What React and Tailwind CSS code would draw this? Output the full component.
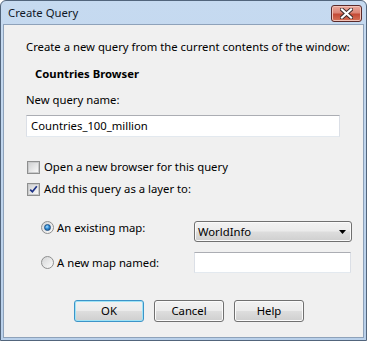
import React from 'react';

const font = { fontFamily: '"Segoe UI", "Noto Sans", "Open Sans", sans-serif' };

function CloseGlyph() {
  return (
    <svg width="13" height="11" viewBox="0 0 13 11" aria-hidden="true">
      <path d="M2 1.5 L11 9.5 M11 1.5 L2 9.5" stroke="#3b2a2a" strokeWidth="4" strokeLinecap="square" />
      <path d="M2 1.5 L11 9.5 M11 1.5 L2 9.5" stroke="#ffffff" strokeWidth="2.2" strokeLinecap="square" />
    </svg>
  );
}

function Checkbox({ checked }) {
  return (
    <span className="grid h-[13px] w-[13px] shrink-0 place-items-center border border-[#8e8f8f] bg-white">
      <span className="grid h-[11px] w-[11px] place-items-center border border-[#c9cacb] bg-gradient-to-br from-[#d2d3d4] to-[#f8f8f8]">
        {checked && (
          <svg width="9" height="9" viewBox="0 0 9 9" aria-hidden="true">
            <path d="M1.2 4.6 L3.4 6.8 L7.8 1.2" fill="none" stroke="#1d3287" strokeWidth="1.7" />
          </svg>
        )}
      </span>
    </span>
  );
}

function Radio({ checked }) {
  return (
    <span className="grid h-[13px] w-[13px] shrink-0 place-items-center rounded-full border border-[#8e8f8f] bg-gradient-to-br from-[#d4d5d6] to-[#fbfbfb]">
      {checked && (
        <span className="h-[7px] w-[7px] rounded-full border border-[#1a4f85] bg-[radial-gradient(circle_at_40%_35%,#a6e0ff_0%,#2f8ad6_45%,#16507f_100%)]" />
      )}
    </span>
  );
}

function Btn({ children, focused }) {
  return (
    <button
      type="button"
      className={
        'h-[22px] w-[70px] rounded-[3px] border text-[11.3px] text-black ' +
        (focused
          ? 'border-[#3c94c8] shadow-[inset_0_0_0_1px_#9fe3f6] bg-[linear-gradient(#f2f2f2_0%,#ebebeb_48%,#dddddd_52%,#cfcfcf_100%)]'
          : 'border-[#707070] shadow-[inset_0_0_0_1px_#fbfbfb] bg-[linear-gradient(#f2f2f2_0%,#ebebeb_48%,#dddddd_52%,#cfcfcf_100%)]')
      }
      style={font}
    >
      {children}
    </button>
  );
}

export default function App() {
  return (
    <div className="h-[341px] w-[367px] bg-white" style={font}>
      <div className="flex h-full w-full flex-col rounded-t-[6px] border border-[#52657c] bg-gradient-to-b from-[#c6daf0] to-[#b9d0ea] px-[2px] pb-[2px]">
        <div className="flex h-[23px] shrink-0 items-center justify-between pl-[5px] pr-[2px]">
          <span className="text-[11.3px] leading-[16px] text-[#101828]">Create Query</span>
          <span className="mt-[2px] grid h-[17px] w-[31px] place-items-center rounded-[3px] border border-[#5a2a2a] bg-[linear-gradient(#eaa99c_0%,#dc8576_45%,#c44a36_55%,#d67258_100%)] shadow-[inset_0_0_0_1px_#f2c3b8]">
            <CloseGlyph />
          </span>
        </div>
        <div className="flex flex-1 flex-col whitespace-nowrap border border-[#8ea2ba] bg-[#f0f0f0] pl-[22px] pt-[14px] text-[11.3px] leading-[16px] text-black">
          <p>Create a new query from the current contents of the window:</p>
          <p className="mt-[11px] ml-[9px] font-bold">Countries Browser</p>
          <p className="mt-[10px]">New query name:</p>
          <div className="mt-[7px] flex h-[22px] w-[314px] items-center border border-[#abadb3] border-x-[#dbdfe6] border-b-[#e3e9ef] bg-white pl-[4px]">
            Countries_100_million
          </div>

          <label className="mt-[19px] flex h-[22px] items-center gap-[4px] pl-[1px]">
            <Checkbox />
            <span>Open a new browser for this query</span>
          </label>
          <label className="flex h-[22px] items-center gap-[4px] pl-[1px]">
            <Checkbox checked />
            <span>Add this query as a layer to:</span>
          </label>

          <div className="mt-[21px] flex h-[21px] items-start">
            <div className="flex w-[168px] items-start gap-[3px] pl-[15px]">
              <Radio checked />
              <span className="-mt-[1px]">An existing map:</span>
            </div>
            <div className="flex h-[21px] w-[158px] items-center justify-between rounded-[3px] border border-[#707070] bg-[linear-gradient(#f2f2f2_0%,#ebebeb_48%,#dddddd_52%,#cfcfcf_100%)] pl-[3px] pr-[5px] shadow-[inset_0_0_0_1px_#fafafa]">
              <span>WorldInfo</span>
              <svg width="7" height="4" viewBox="0 0 7 4" aria-hidden="true">
                <path d="M0 0 H7 L3.5 4 Z" fill="#000" />
              </svg>
            </div>
          </div>

          <div className="mt-[10px] flex h-[21px] items-center">
            <div className="flex w-[168px] items-center gap-[3px] pl-[15px]">
              <Radio />
              <span>A new map named:</span>
            </div>
            <div className="h-[21px] w-[157px] border border-[#abadb3] border-x-[#dbdfe6] border-b-[#e3e9ef] bg-white" />
          </div>

          <div className="mt-[27px] flex gap-[10px] pl-[48px]">
            <Btn focused>OK</Btn>
            <Btn>Cancel</Btn>
            <Btn>Help</Btn>
          </div>
        </div>
      </div>
    </div>
  );
}
